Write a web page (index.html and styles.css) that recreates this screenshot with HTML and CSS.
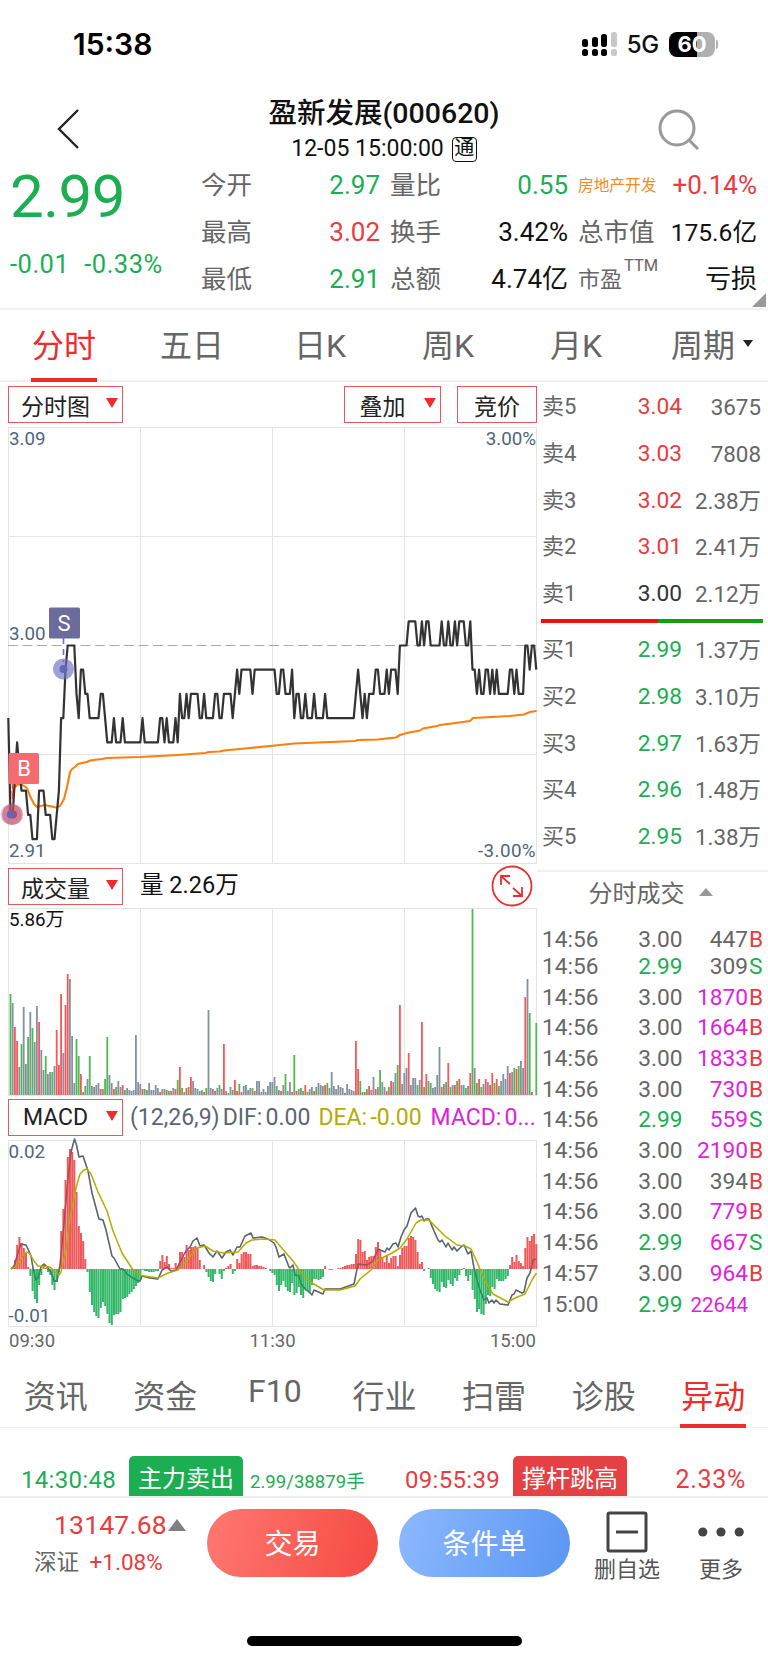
FILE: index.html
```html
<!DOCTYPE html>
<html lang="zh-CN">
<head>
    <meta charset="UTF-8">
    <meta name="viewport" content="width=device-width, initial-scale=1.0">
    <title>盈新发展(000620)</title>
    <link rel="stylesheet" href="styles.css">
</head>
<body>

<div class="status-bar">
    <span class="clock">15:38</span>
    <div class="status-icons">
        <svg class="signal" width="36" height="26" viewBox="0 0 36 26">
            <g fill="#000">
                <rect x="0" y="8" width="6" height="8" rx="2.5"/>
                <rect x="10" y="6" width="6" height="10" rx="2.5"/>
                <rect x="19" y="3" width="6" height="13" rx="2.5"/>
                <rect x="0" y="18" width="6" height="7" rx="2.5"/>
                <rect x="10" y="18" width="6" height="7" rx="2.5"/>
                <rect x="19" y="18" width="6" height="7" rx="2.5"/>
            </g>
            <g fill="#c8c8c8">
                <rect x="29" y="1" width="6" height="15" rx="2.5"/>
                <rect x="29" y="18" width="6" height="7" rx="2.5"/>
            </g>
        </svg>
        <span class="network">5G</span>
        <div class="battery"><span>60</span></div>
    </div>
</div>

<header class="header">
    <svg class="back" width="24" height="42" viewBox="0 0 24 42" fill="none" stroke="#222" stroke-width="2.4">
        <path d="M22 2 L3 21 L22 40"/>
    </svg>
    <div class="header-title">
        <h1>盈新发展(000620)</h1>
        <p>12-05 15:00:00 <span class="tong">通</span></p>
    </div>
    <svg class="search" width="42" height="42" viewBox="0 0 42 42" fill="none" stroke="#999" stroke-width="3">
        <circle cx="19" cy="20" r="17"/>
        <path d="M31 32 L40 41"/>
    </svg>
</header>

<section class="quote">
    <div class="quote-price green">
        <div class="price">2.99</div>
        <div class="change"><span>-0.01</span><span>-0.33%</span></div>
    </div>
    <dl class="quote-grid">
        <div><dt>今开</dt><dd class="green">2.97</dd></div>
        <div><dt>量比</dt><dd class="green">0.55</dd></div>
        <div><dt class="sector">房地产开发</dt><dd class="red">+0.14%</dd></div>
        <div><dt>最高</dt><dd class="red">3.02</dd></div>
        <div><dt>换手</dt><dd>3.42%</dd></div>
        <div><dt>总市值</dt><dd class="cap">175.6亿</dd></div>
        <div><dt>最低</dt><dd class="green">2.91</dd></div>
        <div><dt>总额</dt><dd>4.74亿</dd></div>
        <div><dt class="pe">市盈<sup>TTM</sup></dt><dd>亏损</dd></div>
    </dl>
    <span class="corner"></span>
</section>

<nav class="period-tabs">
    <a class="active">分时</a>
    <a>五日</a>
    <a>日K</a>
    <a>周K</a>
    <a>月K</a>
    <a class="more-periods">周期<i class="caret"></i></a>
</nav>

<main class="board">
    <div class="charts">
        <div class="toolbar">
            <button class="select">分时图</button>
            <button class="select overlay">叠加</button>
            <button class="plain">竞价</button>
        </div>
        <svg class="chart" id="priceChart" width="537" height="444" viewBox="0 424 537 444"></svg>

        <div class="toolbar volume-bar">
            <button class="select">成交量</button>
            <span class="volume-text">量 2.26万</span>
            <svg class="expand" width="42" height="42" viewBox="0 0 42 42" fill="none" stroke="#e93030" stroke-width="1.8">
                <circle cx="21" cy="21" r="19.5"/>
                <path d="M19 19 L10 11 M10 20 V11 H19 M22 23 L31 31 M31 22 V31 H22"/>
            </svg>
        </div>
        <svg class="chart" id="volumeChart" width="537" height="191" viewBox="0 906 537 191"></svg>

        <div class="toolbar macd-bar">
            <button class="select">MACD</button>
            <span class="dif">(12,26,9) DIF: 0.00</span>
            <span class="dea">DEA: -0.00</span>
            <span class="macd">MACD: 0...</span>
        </div>
        <svg class="chart" id="macdChart" width="537" height="190" viewBox="0 1138 537 190"></svg>
        <div class="time-axis"><span>09:30</span><span>11:30</span><span>15:00</span></div>
    </div>

    <aside class="side">
        <ul class="orders sell">
            <li><span>卖5</span><b class="red">3.04</b><em>3675</em></li>
            <li><span>卖4</span><b class="red">3.03</b><em>7808</em></li>
            <li><span>卖3</span><b class="red">3.02</b><em>2.38万</em></li>
            <li><span>卖2</span><b class="red">3.01</b><em>2.41万</em></li>
            <li><span>卖1</span><b class="dark">3.00</b><em>2.12万</em></li>
        </ul>
        <div class="ratio"><i></i></div>
        <ul class="orders">
            <li><span>买1</span><b class="green">2.99</b><em>1.37万</em></li>
            <li><span>买2</span><b class="green">2.98</b><em>3.10万</em></li>
            <li><span>买3</span><b class="green">2.97</b><em>1.63万</em></li>
            <li><span>买4</span><b class="green">2.96</b><em>1.48万</em></li>
            <li><span>买5</span><b class="green">2.95</b><em>1.38万</em></li>
        </ul>
        <h2 class="trades-title">分时成交<i></i></h2>
        <ul class="trades">
            <li><span>14:56</span><b>3.00</b><em>447</em><i class="red">B</i></li>
            <li><span>14:56</span><b class="green">2.99</b><em>309</em><i class="green">S</i></li>
            <li><span>14:56</span><b>3.00</b><em class="big">1870</em><i class="red">B</i></li>
            <li><span>14:56</span><b>3.00</b><em class="big">1664</em><i class="red">B</i></li>
            <li><span>14:56</span><b>3.00</b><em class="big">1833</em><i class="red">B</i></li>
            <li><span>14:56</span><b>3.00</b><em class="big">730</em><i class="red">B</i></li>
            <li><span>14:56</span><b class="green">2.99</b><em class="big">559</em><i class="green">S</i></li>
            <li><span>14:56</span><b>3.00</b><em class="big">2190</em><i class="red">B</i></li>
            <li><span>14:56</span><b>3.00</b><em>394</em><i class="red">B</i></li>
            <li><span>14:56</span><b>3.00</b><em class="big">779</em><i class="red">B</i></li>
            <li><span>14:56</span><b class="green">2.99</b><em class="big">667</em><i class="green">S</i></li>
            <li><span>14:57</span><b>3.00</b><em class="big">964</em><i class="red">B</i></li>
            <li><span>15:00</span><b class="green">2.99</b><em class="big long">22644</em><i></i></li>
        </ul>
    </aside>
</main>

<nav class="info-tabs">
    <a>资讯</a>
    <a>资金</a>
    <a class="latin">F10</a>
    <a>行业</a>
    <a>扫雷</a>
    <a>诊股</a>
    <a class="active">异动</a>
</nav>

<section class="moves">
    <div class="move green">
        <time>14:30:48</time>
        <span class="badge badge-green">主力卖出</span>
        <small>2.99/38879手</small>
    </div>
    <div class="move red">
        <time>09:55:39</time>
        <span class="badge badge-red">撑杆跳高</span>
        <span class="move-value">2.33%</span>
    </div>
</section>

<footer class="footer">
    <div class="index">
        <div class="index-value red">13147.68<i></i></div>
        <div class="index-name">深证 <span class="red">+1.08%</span></div>
    </div>
    <button class="pill trade">交易</button>
    <button class="pill condition">条件单</button>
    <div class="action remove">
        <svg width="42" height="42" viewBox="0 0 42 42" fill="none" stroke="#444" stroke-width="3">
            <rect x="2" y="2" width="38" height="38" rx="1.5"/>
            <path d="M10 21 H32"/>
        </svg>
        <span>删自选</span>
    </div>
    <div class="action more">
        <svg width="46" height="42" viewBox="0 0 46 42" fill="#444">
            <circle cx="4.8" cy="21" r="4.6"/>
            <circle cx="23" cy="21" r="4.6"/>
            <circle cx="41.2" cy="21" r="4.6"/>
        </svg>
        <span>更多</span>
    </div>
</footer>

<div class="home-indicator"></div>

<script src="script.js"></script>
</body>
</html>
```

FILE: styles.css
```css
* {
    box-sizing: border-box;
}

body {
    margin: 0;
    width: 768px;
    height: 1663px;
    overflow: hidden;
    background-color: #fff;
    color: #111;
    font-family: Roboto, "Noto Sans CJK SC", sans-serif;
}

h1, h2, p, ul, dl, dd {
    margin: 0;
    padding: 0;
}

ul {
    list-style: none;
}

b, em, i {
    font-weight: normal;
    font-style: normal;
}

button {
    font-family: inherit;
    padding: 0;
}

.green {
    color: #1bae52;
}

.red {
    color: #e83c40;
}

.dark {
    color: #333;
}

/* status bar */
.status-bar {
    height: 88px;
    padding: 0 53px 0 73px;
    display: flex;
    justify-content: space-between;
    align-items: center;
}

.clock {
    font-family: Inter, sans-serif;
    font-size: 30px;
    font-weight: 600;
    color: #000;
}

.status-icons {
    display: flex;
    align-items: center;
}

.network {
    font-family: Inter, sans-serif;
    font-size: 24px;
    font-weight: 500;
    letter-spacing: -0.3px;
    margin: 1px 10px 0 9px;
}

.battery {
    position: relative;
    width: 46px;
    height: 25px;
    border-radius: 8px;
    background: linear-gradient(to right, #000 60%, #b0b0b0 60%);
    color: #fff;
    font-family: Inter, sans-serif;
    font-size: 22px;
    font-weight: 700;
    line-height: 25px;
    text-align: center;
}

.battery::after {
    content: "";
    position: absolute;
    left: 47px;
    top: 8px;
    width: 2px;
    height: 9px;
    border-radius: 0 2px 2px 0;
    background-color: #b0b0b0;
}

/* header */
.header {
    height: 74px;
    padding: 0 68px 0 56px;
    display: flex;
    justify-content: space-between;
}

.back {
    margin-top: 20px;
}

.search {
    margin-top: 20px;
}

.header-title {
    text-align: center;
    padding-left: 30px;
}

.header-title h1 {
    font-size: 28.5px;
    font-weight: 500;
    line-height: 36px;
    padding-top: 8px;
}

.header-title p {
    display: flex;
    justify-content: center;
    align-items: center;
    font-size: 23px;
    line-height: 30px;
    margin-top: 2px;
}

.tong {
    width: 25px;
    height: 25px;
    margin-left: 8px;
    border: 1.5px solid #111;
    border-radius: 4px;
    font-size: 20px;
    line-height: 21px;
    text-align: center;
}

/* quote */
.quote {
    position: relative;
    height: 148px;
    display: flex;
    border-bottom: 2px solid #f2f2f2;
}

.quote-price {
    width: 201px;
    padding-left: 10px;
}

.price {
    font-size: 60px;
    line-height: 70px;
    letter-spacing: -0.5px;
}

.change {
    display: flex;
    gap: 15px;
    font-size: 25.5px;
    letter-spacing: 0.5px;
    line-height: 30px;
    margin-top: 17px;
}

.quote-grid {
    width: 556px;
    display: grid;
    grid-template-columns: 179px 178px 179px;
    grid-auto-rows: 47px;
    column-gap: 10px;
}

.quote-grid div {
    display: flex;
    justify-content: space-between;
    font-size: 26px;
    line-height: 47px;
    white-space: nowrap;
}

.quote-grid dt {
    color: #666;
    font-size: 25.5px;
}

.quote-grid .sector {
    color: #f58b1e;
    font-size: 15.7px;
}

.quote-grid .cap {
    font-size: 24.6px;
}

.quote-grid .pe {
    font-size: 22px;
}

.pe sup {
    font-size: 16.5px;
    line-height: 0;
    vertical-align: 16px;
    margin-left: 2px;
}

.corner {
    position: absolute;
    right: 2px;
    bottom: 1px;
    border-left: 14px solid transparent;
    border-bottom: 14px solid #999;
}

/* tabs */
.period-tabs {
    height: 72px;
    display: grid;
    grid-template-columns: repeat(6, 1fr);
    border-bottom: 2px solid #f0f0f0;
}

.period-tabs a, .info-tabs a {
    display: flex;
    justify-content: center;
    align-items: center;
    position: relative;
    color: #666;
    font-size: 32px;
}

.period-tabs a {
    padding-bottom: 4px;
}

.period-tabs .more-periods {
    padding-left: 8px;
}

.period-tabs .active, .info-tabs .active {
    color: #ee2c2c;
}

.active::after {
    content: "";
    position: absolute;
    bottom: -2px;
    width: 66px;
    height: 4px;
    background-color: #ee2c2c;
}

.info-tabs .active::after {
    bottom: -1px;
}

.caret {
    margin: 0 -8px 0 8px;
    border: 5px solid transparent;
    border-top: 7px solid #222;
    border-bottom: 0;
}

/* board */
.board {
    display: flex;
    height: 978px;
}

.charts {
    width: 537px;
    padding-top: 4px;
}

.chart {
    display: block;
    overflow: visible;
}

.chart text {
    font-size: 18.8px;
    fill: #50667a;
}

.toolbar {
    height: 38px;
    padding-left: 8px;
    display: flex;
    align-items: flex-start;
}

.toolbar button {
    flex-shrink: 0;
    height: 37px;
    border: 1px solid #e35a5a;
    background-color: #fff;
    color: #222;
    font-size: 23px;
}

.toolbar .select {
    position: relative;
    width: 115px;
    padding-right: 20px;
    text-align: center;
}

.toolbar .select::after {
    content: "";
    position: absolute;
    right: 4px;
    top: 11px;
    border: 6.5px solid transparent;
    border-top: 10px solid #ee2c2c;
    border-bottom: 0;
}

.toolbar .overlay {
    width: 97px;
    margin-left: auto;
    margin-right: 16px;
}

.toolbar .plain {
    width: 80px;
}

.volume-bar {
    font-size: 23.5px;
    line-height: 35px;
}

.volume-text {
    margin-left: 17px;
}

.expand {
    margin: -3px 4px 0 auto;
}

.macd-bar {
    height: 41px;
    padding-top: 2px;
    font-size: 23px;
    line-height: 37px;
    white-space: nowrap;
    word-spacing: -2.5px;
}

.dif {
    margin-left: 7px;
    color: #5c6672;
}

.dea {
    margin-left: 8px;
    color: #b5ac00;
}

.macd {
    margin-left: 9px;
    color: #e01ee0;
}

.time-axis {
    display: flex;
    justify-content: space-between;
    padding: 1px 1px 0 9px;
    font-size: 18.5px;
    line-height: 24px;
    color: #666;
}

/* order book */
.side {
    width: 231px;
    color: #666;
    font-size: 22.7px;
}

.orders {
    padding-left: 5px;
}

.sell {
    padding-top: 2px;
}

.orders li {
    display: grid;
    grid-template-columns: 50px 90px 1fr;
    padding-right: 7px;
    line-height: 46.8px;
    height: 46.8px;
}

.orders li span {
    font-size: 22px;
}

.orders b, .orders em, .trades b, .trades em {
    text-align: right;
}

.orders em {
    font-size: 22.4px;
}

.ratio {
    height: 4px;
    margin: 1px 5px 4px 4px;
    background-color: #12a012;
}

.ratio i {
    display: block;
    width: 117px;
    height: 4px;
    background-color: #ee1111;
}

.trades-title {
    display: flex;
    justify-content: center;
    align-items: center;
    height: 54px;
    margin-top: 9px;
    padding: 0 4px 12px 0;
    border-top: 2px solid #f2f2f2;
    font-size: 24px;
    font-weight: normal;
}

.trades-title i {
    margin-left: 14px;
    border: 7.5px solid transparent;
    border-top: 0;
    border-bottom: 8px solid #999;
}

.trades {
    padding: 1px 0 0 5px;
}

.trades li {
    display: grid;
    grid-template-columns: 60px 80.5px 65.5px 1fr;
    height: 30.7px;
    line-height: 30.7px;
}

.trades li:first-child {
    height: 27px;
}

.trades i {
    padding-left: 1px;
}

.trades .big {
    color: #e01ee0;
}

.trades .long {
    font-size: 20.5px;
}

/* info tabs */
.info-tabs {
    height: 68px;
    padding-left: 1px;
    display: grid;
    grid-template-columns: repeat(7, 1fr);
    border-bottom: 1px solid #eee;
}

.info-tabs .latin {
    padding-bottom: 5px;
}

/* moves */
.moves {
    display: grid;
    grid-template-columns: 384px 362px;
    height: 70px;
    padding-top: 28px;
    border-bottom: 2px solid #f0f0f0;
    overflow: hidden;
}

.move {
    display: flex;
    align-items: center;
    height: 47px;
    padding-left: 21px;
    font-size: 24px;
}

.move time {
    width: 108px;
    letter-spacing: 0.3px;
}

.move small {
    margin-left: 7px;
    font-size: 18.6px;
}

.badge {
    width: 114px;
    height: 47px;
    border-radius: 5px;
    color: #fff;
    text-align: center;
    line-height: 47px;
}

.badge-green {
    background-color: #1bae52;
}

.badge-red {
    background-color: #e54044;
}

.move-value {
    margin-left: auto;
    font-size: 25px;
    letter-spacing: 0.7px;
}

/* footer */
.footer {
    display: flex;
    height: 113px;
    padding-top: 11px;
}

.index {
    width: 207px;
}

.index-value {
    display: flex;
    align-items: center;
    padding: 1px 0 0 54px;
    font-size: 26.5px;
    letter-spacing: 0.2px;
    line-height: 30px;
}

.index-value i {
    margin-left: 1px;
    border: 9px solid transparent;
    border-top: 0;
    border-bottom: 12px solid #808080;
}

.index-name {
    padding: 7px 0 0 34px;
    font-size: 22.5px;
    line-height: 30px;
    color: #666;
}

.index-name span {
    margin-left: 5px;
}

.pill {
    width: 171px;
    height: 68px;
    border: 0;
    border-radius: 34px;
    padding-bottom: 2px;
    color: #fff;
    font-size: 28px;
}

.trade {
    margin-right: 21px;
    background: linear-gradient(105deg, #ff7872, #f54a42);
}

.condition {
    background: linear-gradient(105deg, #8db8ff, #5a96f2);
}

.action {
    display: flex;
    flex-direction: column;
    align-items: center;
    padding-top: 2px;
    font-size: 22px;
    line-height: 34px;
    color: #555;
}

.remove {
    margin-left: 24px;
}

.more {
    margin-left: 38px;
}

.home-indicator {
    width: 275px;
    height: 10px;
    margin: 25px auto 0 247px;
    border-radius: 5px;
    background-color: #000;
}
```

FILE: script.js
```javascript
const LEFT = 8.3;
const STEP = 2.2;
const RED = '#ee4a4c';
const GREEN = '#21b35c';

const grid = (top, bottom, rows) => {
    let lines = `<rect x="8.5" y="${top}" width="528" height="${bottom - top}"/>`;
    for (const x of [140.5, 272.5, 404.5]) lines += `<path d="M${x} ${top} V${bottom}"/>`;
    for (const y of rows) lines += `<path d="M8.5 ${y} H536.5"/>`;
    return `<g fill="none" stroke="#e4e4e4">${lines}</g>`;
};

const polyline = (points, color, width) =>
    `<polyline points="${points}" fill="none" stroke="${color}" stroke-width="${width}" stroke-linejoin="round"/>`;

// minute:cents above 2.90, only where the price turns
const prices = `0:7 1:3 2:3 3:4.5 4:6 5:5 6:4 8:4 9:3 10:3 11:2 13:2 14:4 16:4 17:3 19:3 20:2 21:2 22:3 23:4 24:7 25:7 26:9 27:10 30:10
31:8 32:7 33:9 34:9 35:8 36:8 37:7 41:7 42:8 43:8 44:7 45:6 47:6 48:7 49:6 51:6 52:7 53:6 60:6 61:7 62:6 68:6 69:7 70:7 71:6 72:7
73:6 75:6 76:7 77:6 78:8 79:7 80:7 81:8 82:7 83:8 86:8 87:7 88:7 89:8 90:7 93:7 94:8 95:8 96:7 97:7 98:8 101:8 102:7 103:8 104:9
105:8 106:9 110:9 111:8 112:9 121:9 122:8 123:8 124:9 125:9 126:8 128:8 129:9 130:7 131:8 132:8 133:7 134:7 135:8 136:7 138:7
139:8 140:7 143:7 144:8 145:7 157:7 158:8 159:9 160:8 161:7 162:8 163:7 164:8 166:8 167:9 168:9 169:8 171:8 172:9 173:8 174:9
176:9 177:8 178:10 181:10 182:11 185:11 186:10 187:10 188:11 189:10 190:11 191:11 192:10 196:10 197:11 198:10 199:10 200:11
201:10 202:10 203:11 204:10 205:11 207:11 208:10 209:10 210:11 211:9 212:9 213:8 214:9 215:8 216:8 217:9 218:9 219:8 220:9
221:8 222:9 223:8 227:8 228:9 229:9 230:8 231:9 232:8 234:8 235:10 236:10 237:9 238:10 239:10 240:9`;

const average = `12,793 14,788 17,785 21,784 24,786 27,788 30,796 34,804 37,807 45,805 56,807.5 60,806 64,799 67,787 70,772 72,769 75,767
78,764 82,763 87,762 90,760.5 102,759 107,758 140,757 178,755 205,753 209,752 220,751.5 224,750.5 250,748 280,745 294,743.5 355,741
358,740 378,739.5 396,737.5 400,735 407,733 420,730.5 423,728.5 437,726 440,725 448,724 470,721 473,718 510,716 524,714.5 530,712 536.5,711`;

const volumes = `g101 s92 r68 r54 s28 g51 s88 s31 g58 s83 g67 s53 s89 r73 s45 s25 g39 s21 s23 g23 s29 r65 r30 r101 s42 r90 r121 s116 s59 s12
g56 g39 r21 s3 g9 s16 g39 s9 s8 s10 s12 r6 s6 g16 g58 s20 s12 r6 g8 s14 s8 r10 g5 s7 s5 s4 s5 s60 s13 s11
r6 g6 s5 s12 s5 s5 s10 s7 r3 s6 g6 r5 g4 s4 s7 r6 g15 r28 g7 s3 r7 g8 r18 s14 s7 s6 g4 s5 r3 g7
s85 s7 s6 r4 s7 g10 s6 r51 s4 s2 s8 g5 r15 r4 g11 r3 s9 s10 s5 s7 g7 r4 s14 s14 s3 s6 s3 s9 s13 s13
s18 g9 s5 r4 s10 g21 s4 s13 r3 g40 r4 s6 g7 s4 r10 g3 s6 s8 r4 g8 s12 s10 s9 r10 g12 s7 s23 s9 s6 s10
s8 s7 s2 s11 s6 s5 s4 r54 r26 g14 g3 r3 g6 r9 s5 s18 r6 s8 g25 s13 s8 r4 g8 r14 s13 s22 g30 r90 s11 s22
s27 r42 s10 s17 s17 g10 s15 r73 g8 r21 s14 g12 s7 s8 s20 s48 r8 g11 s13 r32 g8 s10 r10 g14 r16 s10 s10 g7 s9 r22
g186 s27 g12 r16 g8 s11 r16 s13 r10 r22 g12 r16 g9 s14 s21 s16 s29 r22 s23 g27 r26 g29 s34 s27 r98 s116 g82 r3 s0 g72`;

const macd = `0 1 9 24 32 26 21 16 2 -7 -22 -30 -34 -16 -6 4 1 -3 -6 -16 -21 -13 -3 38 60 89 112 120 117 109
77 43 36 28 10 -3 -23 -36 -43 -47 -49 -39 -33 -37 -45 -54 -56 -46 -45 -45 -43 -30 -29 -28 -25 -23 -20 -17 -14 -11
-1 -2 -2 -3 -3 -3 -2 -2 8 14 7 13 5 1 1 6 3 17 17 12 24 19 22 22 23 21 9 0 4 -3
-8 -12 -13 -5 0 -5 -10 -2 1 3 5 -5 -2 10 6 15 17 17 15 15 3 4 4 3 3 2 1 0 -2 -4
-6 -16 -22 -16 -12 -18 -22 -23 -14 -26 -24 -18 -26 -29 -20 -22 -23 -16 -10 -10 -11 -10 -8 3 0 -1 -1 0 0 1
1 2 3 4 4 5 5 15 30 29 17 18 9 12 13 13 22 27 19 12 7 13 6 11 13 13 3 14 21 23
23 31 33 32 29 17 5 7 -2 0 1 -9 -15 -20 -22 -23 -13 -18 -19 -11 -15 -17 -9 -12 -6 -1 1 -7 -12 -6
-21 -30 -43 -40 -45 -46 -35 -26 -27 -18 -20 -10 -12 -12 -12 -10 -7 4 12 7 14 8 6 3 21 32 28 33 35 25`;

const dif = `11,1269 14,1266 18,1253 21,1244 26,1245 28,1249 31,1256 33,1268 36,1280 38,1278 41,1267 44,1264 48,1268 51,1272 54,1281 57,1281
60,1265 63,1235 66,1200 68,1178 71,1152 74.5,1139 76.5,1145 79,1157 83,1156 88,1171 92,1193 99,1219 103,1220 106,1230 112,1256 114,1258
120,1269 123,1269 128,1275 138,1281 140,1281 142,1276 150,1278 158,1279 162,1270 167,1267 171,1271 176,1270 181,1260 186,1251 190,1247
193,1241 197,1238 200,1246 204,1245 209,1253 213,1257 217,1251 222,1258 226,1252 230,1250 233,1255 237,1247 240,1247 245,1236 251,1233
253,1238 262,1237 268,1239 274,1243 276,1247 279,1257 284,1254 289,1267 290,1268 293,1265 295,1275 299,1276 301,1284 306,1290 308,1291
312,1295 314,1290 323,1294 325,1289 340,1289 354,1284 358,1264 367,1265 373,1261 378,1249 385,1252 387,1248 389,1250 393,1244 396,1243
398,1247 401,1237 404,1230 407,1226 411,1213 415.5,1208 418,1216 420,1217 422,1216 424,1221 426,1219 429,1219 434,1231 438,1240 440,1242
442,1240 446,1247 448,1243 452,1250 454,1247 457,1251 462,1246 464,1245 468,1254 471,1251 474,1268 477,1280 480,1290 484,1300 487,1298
489,1303 492,1300 494,1303 496,1300 500,1304 508,1305 512,1295 514,1294 516,1290 522,1293 524,1292 527,1278 530,1273 533,1260 536.5,1259`;

const dea = `11,1269 15,1267 20,1261 24,1254 27,1252 30,1254 34,1261 38,1266 50,1267 54,1271 59,1275 61,1272 66,1250 70,1218 76,1188 80,1174
84,1170 87,1169 91,1174 98,1192 107,1211 113,1231 122,1253 133,1270 141,1275.5 158,1278 168,1273 178,1270 184,1264 197,1248 205,1246
213,1251 223,1253 238,1252 246,1243 252,1240 265,1239 275,1240 280,1246 293,1261 302,1274 312,1283 324,1290 340,1290 355,1286 360,1279
371,1270 378,1260 392,1253 400,1248 407,1239 416,1223 421,1220 429,1220 436,1227 445,1236 457,1245 465,1246 471,1249 477,1262 485,1281
493,1294 508,1302 515,1298 525,1294 532,1280 536.5,1273`;

const pricePoints = prices.split(/\s+/).map((p) => {
    const [minute, cents] = p.split(':').map(Number);
    return `${(LEFT + minute * STEP).toFixed(1)},${(887.5 - cents * 24.2).toFixed(1)}`;
}).join(' ');

document.getElementById('priceChart').innerHTML = `
    ${grid(427.5, 863.5, [536.5, 754.5])}
    <path d="M8 645.5 H536" stroke="#aaa" stroke-dasharray="10 4.5"/>
    ${polyline(average, '#ff7e0c', 2.1)}
    ${polyline(pricePoints, '#333', 2.2)}
    <path d="M63.5 638 V662" stroke="#6d6fc0" stroke-width="1.6" stroke-dasharray="6 5"/>
    <circle cx="63.5" cy="669" r="10.5" fill="#6d6fc0" fill-opacity=".65"/>
    <circle cx="63.5" cy="669" r="4" fill="#6466b8"/>
    <rect x="49" y="607.5" width="31" height="31" rx="1.5" fill="#6c6c9c"/>
    <path d="M12.5 783 V805" stroke="#f0404a" stroke-width="1.6" stroke-dasharray="6 4"/>
    <circle cx="11" cy="814.5" r="10.5" fill="#6d6fc0" fill-opacity=".35"/>
    <circle cx="12.5" cy="814.5" r="10.5" fill="#d8475a" fill-opacity=".6"/>
    <circle cx="13" cy="814.5" r="4" fill="#b84868"/>
    <circle cx="10.8" cy="814.5" r="4" fill="#6466b8"/>
    <rect x="8.5" y="753" width="30.5" height="31" rx="1.5" fill="#f56c70"/>
    <text class="mark" x="64" y="631" text-anchor="middle">S</text>
    <text class="mark" x="24" y="776" text-anchor="middle">B</text>
    <text x="9" y="445">3.09</text>
    <text x="9" y="640">3.00</text>
    <text x="9" y="857">2.91</text>
    <text x="536" y="445" text-anchor="end">3.00%</text>
    <text x="536" y="857" text-anchor="end" letter-spacing=".4">-3.00%</text>`;
document.querySelectorAll('.mark').forEach((mark) => {
    mark.style.fontSize = '22px';
    mark.style.fill = '#fff';
});

const volumeColors = {r: '#f85658', g: '#4fb84f', s: '#8492a0'};
const volumeBars = volumes.split(/\s+/).map((v, i) => {
    const height = Number(v.slice(1));
    const x = LEFT + (i + 1) * STEP - 0.9;
    return `<rect x="${x.toFixed(1)}" y="${1095 - height}" width="1.8" height="${height}" fill="${volumeColors[v[0]]}"/>`;
}).join('');

document.getElementById('volumeChart').innerHTML = `
    ${grid(908.5, 1095.5, [])}
    ${volumeBars}
    <text x="9" y="926" style="fill:#111">5.86万</text>`;

const macdBars = macd.split(/\s+/).map((v, i) => {
    const value = Number(v);
    const x = LEFT + (i + 1) * STEP - 0.95;
    return `<rect x="${x.toFixed(1)}" y="${value > 0 ? 1269 - value : 1269}" width="2" height="${Math.abs(value)}" fill="${value > 0 ? RED : GREEN}"/>`;
}).join('');

document.getElementById('macdChart').innerHTML = `
    ${grid(1140.5, 1326.5, [])}
    ${polyline(dif, '#66707c', 1.5)}
    <g fill-opacity=".93">${macdBars}</g>
    <g opacity=".35">${polyline(dif, '#404a56', 1.3)}</g>
    ${polyline(dea, '#b5ac00', 1.5)}
    <text x="8.5" y="1158">0.02</text>
    <text x="8.5" y="1322">-0.01</text>`;
```
